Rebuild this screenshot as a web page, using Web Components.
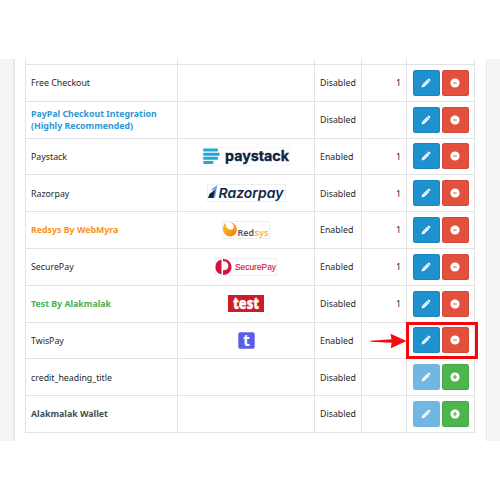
<!DOCTYPE html>
<html lang="en">
<head>
<meta charset="utf-8">
<title>Payment extensions</title>
<style>
    body {
        margin: 0;
        background: #fff;
        font-family: "Noto Sans", "Open Sans", sans-serif;
        font-size: 8.8px;
        color: #262626;
    }
</style>
</head>
<body>
<payment-panel>
    <payment-row name="Free Checkout" status="Disabled" order="1"></payment-row>
    <payment-row name="PayPal Checkout Integration (Highly Recommended)" tone="blue" status="Disabled"></payment-row>
    <payment-row name="Paystack" status="Enabled" order="1"><brand-logo brand="paystack"></brand-logo></payment-row>
    <payment-row name="Razorpay" status="Disabled" order="1"><brand-logo brand="razorpay"></brand-logo></payment-row>
    <payment-row name="Redsys By WebMyra" tone="orange" status="Enabled" order="1"><brand-logo brand="redsys"></brand-logo></payment-row>
    <payment-row name="SecurePay" status="Enabled" order="1"><brand-logo brand="securepay"></brand-logo></payment-row>
    <payment-row name="Test By Alakmalak" tone="green" status="Disabled" order="1"><brand-logo brand="test"></brand-logo></payment-row>
    <payment-row name="TwisPay" status="Enabled" marked><brand-logo brand="twispay"></brand-logo></payment-row>
    <payment-row name="credit_heading_title" status="Disabled" install></payment-row>
    <payment-row name="Alakmalak Wallet" tone="dark" status="Disabled" install></payment-row>
</payment-panel>

<script>
// Logos, each with its own size
const logos = {
    paystack: `
        <svg width="88" height="19" viewBox="0 0 88 19">
            <rect x=".5" y=".5" width="87" height="18" fill="#fff" stroke="#f6f6f6"/>
            <g fill="#22a7d8">
                <rect x="1.3" y="1.6" width="14.6" height="3" rx=".6"/>
                <rect x="1.3" y="5.7" width="16.3" height="3" rx=".6"/>
                <rect x="1.3" y="9.8" width="14.6" height="3" rx=".6"/>
                <rect x="1.3" y="13.9" width="10" height="3" rx=".6"/>
            </g>
            <text x="23" y="13.8" textLength="64" lengthAdjust="spacingAndGlyphs" font-family="Inter" font-weight="700" font-size="14.2" fill="#0c2340" stroke="#0c2340" stroke-width=".3">paystack</text>
        </svg>`,
    razorpay: `
        <svg width="79" height="18" viewBox="0 0 79 18">
            <rect x=".5" y=".5" width="78" height="17" fill="#fff" stroke="#efefef"/>
            <path d="M4.6 5.2 10.3.9 8 14H5.3L7 5.5 4.8 7Z" fill="#62a7f4"/>
            <path d="M1 14 2.6 9.8 8.3 5.8 6.3 14Z" fill="#10264b"/>
            <text x="11.5" y="14" textLength="65" lengthAdjust="spacingAndGlyphs" font-family="Inter" font-weight="600" font-style="italic" font-size="13.5" fill="#10264b">Razorpay</text>
        </svg>`,
    redsys: `
        <svg width="48" height="18" viewBox="0 0 48 18">
            <rect x=".5" y=".5" width="47" height="17" fill="#fff" stroke="#eee"/>
            <defs>
                <linearGradient id="sun" x1="0" y1="0" x2="1" y2="1">
                    <stop offset="0" stop-color="#ffc928"/>
                    <stop offset="1" stop-color="#ee7a16"/>
                </linearGradient>
            </defs>
            <path d="M4 1.7C1.5 3.6.7 5.8 1 8.8c.5 4 3.5 6.6 7.3 6.6 4 0 6.5-3 6.5-6.8C14.8 5 12.5 1.8 7.5 1.3c3.200 1 4.800 3.200 4.300 5.200-.6 2.200-3.500 2.900-5.500 1.600C4.300 6.700 3.400 4.600 4 1.700Z" fill="url(#sun)"/>
            <g font-family="Noto Sans" font-weight="600" font-size="9.6">
                <text x="15.500" y="15" textLength="16.500" lengthAdjust="spacingAndGlyphs" fill="#555">Red</text>
                <text x="32.600" y="15" textLength="14" lengthAdjust="spacingAndGlyphs" fill="#fbb425">sys</text>
            </g>
        </svg>`,
    securepay: `
        <svg width="62" height="18" viewBox="0 0 62 18">
            <rect x=".5" y=".5" width="61" height="17" fill="#fff" stroke="#eee"/>
            <path d="M6.500 1.400A7.800 7.800 0 0 0 6.500 16.600Z" fill="#d5133a"/>
            <path d="M8 1C13 1 16.500 4.500 16.500 9S13 17 8 17V12.300C11.500 12.300 13.400 10.600 13.400 7.900 13.400 5.300 11.500 3.300 8 3.300Z" fill="#d5133a"/>
            <text x="20" y="12.400" textLength="41" lengthAdjust="spacingAndGlyphs" font-family="Liberation Sans" font-size="9.400" fill="#d5133a" stroke="#d5133a" stroke-width=".15">SecurePay</text>
        </svg>`,
    test: `
        <svg width="36" height="17" viewBox="0 0 36 17">
            <rect width="36" height="17" fill="#cf1b26"/>
            <text x="5" y="14" textLength="26" lengthAdjust="spacingAndGlyphs" font-family="Noto Sans" font-weight="900" font-size="16" fill="#fff" stroke="#fff" stroke-width=".3">test</text>
        </svg>`,
    twispay: `
        <svg width="17" height="17" viewBox="0 0 17 17">
            <rect x=".3" y=".3" width="16.400" height="16.400" rx="1.800" fill="#5b5ce8"/>
            <text x="5" y="13.600" textLength="7" lengthAdjust="spacingAndGlyphs" font-family="Noto Sans" font-weight="700" font-size="15.500" fill="#fff">t</text>
        </svg>`
};

class BrandLogo extends HTMLElement {
    connectedCallback() {
        this.attachShadow({ mode: 'open' }).innerHTML = `
            <style>
                :host { display: block; line-height: 0; }
                svg { display: block; overflow: visible; }
            </style>
            ${logos[this.getAttribute('brand')] || ''}
        `;
    }
}

// Glyphs on the action buttons
const icons = {
    edit: `<svg width="10" height="10" viewBox="0 0 10 10"><path d="M.6 9.400 1.200 6.700 6.100 1.800 8.200 3.900 3.300 8.800ZM6.500 1.400 7.300.7Q7.900.3 8.500.9L9.100 1.500Q9.700 2.100 9.200 2.700L8.600 3.500Z" fill="#fff"/><path d="M2.700 6.900 6.200 3.400" stroke="var(--button)" stroke-width=".4"/></svg>`,
    remove: `<svg width="10" height="10" viewBox="0 0 10 10"><circle cx="5" cy="5" r="4.600" fill="#fff"/><path d="M3.300 5h3.400" stroke="var(--button)" stroke-width="1"/></svg>`,
    add: `<svg width="10" height="10" viewBox="0 0 10 10"><circle cx="5" cy="5" r="4.600" fill="#fff"/><path d="M2.800 5h4.400M5 2.800v4.400" stroke="var(--button)" stroke-width="1.200"/></svg>`
};

class ActionButton extends HTMLElement {
    connectedCallback() {
        this.attachShadow({ mode: 'open' }).innerHTML = `
            <style>
                :host {
                    --button: #1e91cf;
                    display: flex;
                    align-items: center;
                    justify-content: center;
                    box-sizing: border-box;
                    width: 27.300px;
                    height: 26px;
                    border: 1px solid rgba(0, 0, 0, .08);
                    border-radius: 2.500px;
                    background: var(--button);
                }
                :host([icon="remove"]) { --button: #e3503e; }
                :host([icon="add"]) { --button: #4cb64c; }
                :host([disabled]) { --button: #70b7e1; border-color: transparent; }
                svg { display: block; }
            </style>
            ${icons[this.getAttribute('icon')]}
        `;
    }
}

class PaymentRow extends HTMLElement {
    connectedCallback() {
        const install = this.hasAttribute('install');
        const marker = this.hasAttribute('marked') ? `
            <div class="frame"></div>
            <svg class="arrow" width="37" height="16" viewBox="0 0 37 16">
                <path d="M.5 7.700 21.500 6.200 20.500.8 36.500 8 20.800 15.300 21.600 9.700.5 8.800Z" fill="#f30d12"/>
            </svg>` : '';

        this.attachShadow({ mode: 'open' }).innerHTML = `
            <style>
                :host {
                    position: relative;
                    display: grid;
                    grid-template-columns: 152px 137px 47px 45px 68px;
                    box-sizing: border-box;
                    border-bottom: 1px solid #e3e3e5;
                    line-height: 12.400px;
                }
                .cell {
                    display: flex;
                    align-items: center;
                    box-sizing: border-box;
                    padding: 1px 5px 0;
                    border-right: 1px solid #e3e3e5;
                }
                .logo { justify-content: center; padding-top: 0; }
                .order { justify-content: flex-end; }
                .actions { gap: 2px; padding: 0 0 0 5.500px; }
                :host([tone]) .name { font-weight: 700; }
                :host([tone="blue"]) .name { color: #2d98d4; }
                :host([tone="orange"]) .name { color: #f7931e; }
                :host([tone="green"]) .name { color: #4cb050; }
                :host([tone="dark"]) .name { color: #444e58; }
                .frame {
                    position: absolute;
                    top: -1px;
                    right: -3px;
                    box-sizing: border-box;
                    width: 72px;
                    height: 37px;
                    border: 3px solid #f5060c;
                }
                .arrow { position: absolute; right: 68px; top: 10.500px; }
            </style>
            <div class="cell name">${this.getAttribute('name')}</div>
            <div class="cell logo"><slot></slot></div>
            <div class="cell status">${this.getAttribute('status')}</div>
            <div class="cell order">${this.getAttribute('order') || ''}</div>
            <div class="cell actions">
                <action-button icon="edit" ${install ? 'disabled' : ''}></action-button>
                <action-button icon="${install ? 'add' : 'remove'}"></action-button>
            </div>
            ${marker}
        `;
    }
}

class PaymentPanel extends HTMLElement {
    connectedCallback() {
        this.attachShadow({ mode: 'open' }).innerHTML = `
            <style>
                :host {
                    display: block;
                    box-sizing: border-box;
                    height: 382px;
                    margin: 59px 0;
                    padding: 0 13px;
                    background: #f5f5f5;
                }
                .panel {
                    box-sizing: border-box;
                    height: 100%;
                    padding: 0 10px;
                    border: solid #e8e8e8;
                    border-width: 0 1px 0 2px;
                    background: #fff;
                }
                .table {
                    display: grid;
                    grid-template-rows: 6px;
                    grid-auto-rows: 36.800px;
                    width: 450px;
                    box-sizing: border-box;
                    border-left: 1px solid #e3e3e5;
                }
                /* Bottom edge of the row that is scrolled out above */
                .stub {
                    display: grid;
                    grid-template-columns: 152px 137px 47px 45px 68px;
                    border-bottom: 1px solid #e3e3e5;
                }
                .stub i { border-right: 1px solid #e3e3e5; }
            </style>
            <div class="panel">
                <div class="table">
                    <div class="stub"><i></i><i></i><i></i><i></i><i></i></div>
                    <slot></slot>
                </div>
            </div>
        `;
    }
}

customElements.define('brand-logo', BrandLogo);
customElements.define('action-button', ActionButton);
customElements.define('payment-row', PaymentRow);
customElements.define('payment-panel', PaymentPanel);
</script>
</body>
</html>
